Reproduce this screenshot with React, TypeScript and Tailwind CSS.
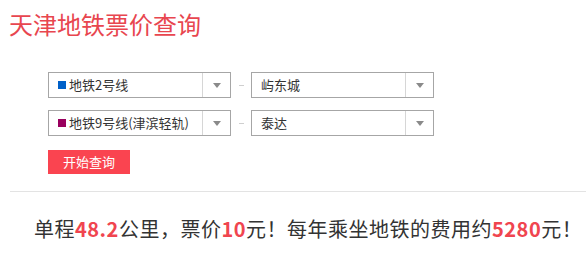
const FONT = '"Microsoft YaHei", "Noto Sans CJK SC", "Noto Sans", sans-serif';

type Opt = { label: string; color?: string };

const Select = ({ opt }: { opt: Opt }) => (
  <div className="flex h-[26px] w-[183px] items-stretch border border-[#a6a6a6] bg-white">
    <div className="flex flex-1 items-center gap-[3px] pl-[9px] text-[13px] text-[#333]">
      {opt.color && <span className="inline-block h-[8px] w-[8px]" style={{ background: opt.color }} />}
      <span>{opt.label}</span>
    </div>
    <div className="flex w-[28px] items-center justify-center border-l border-[#d6d6d6]">
      <svg width="8" height="5" viewBox="0 0 8 5">
        <path d="M0 0h8L4 5z" fill="#8a8a8a" />
      </svg>
    </div>
  </div>
);

const Row = ({ line, station }: { line: Opt; station: Opt }) => (
  <div className="flex items-center">
    <Select opt={line} />
    <div className="flex w-[20px] justify-center">
      <span className="block h-px w-[5px] bg-[#cfcfcf]" />
    </div>
    <Select opt={station} />
  </div>
);

export default function App() {
  return (
    <div className="w-[586px] bg-white" style={{ fontFamily: FONT }}>
      <h1 className="pl-[9px] pt-[8px] text-[24px] leading-[32px] font-normal text-[#e8464f]">天津地铁票价查询</h1>

      <div className="ml-[48px] mt-[32px] flex flex-col gap-[12px]">
        <Row line={{ label: "地铁2号线", color: "#0060c8" }} station={{ label: "屿东城" }} />
        <Row line={{ label: "地铁9号线(津滨轻轨)", color: "#99005e" }} station={{ label: "泰达" }} />
      </div>

      <button className="ml-[48px] mt-[14px] flex h-[24px] w-[82px] items-center justify-center bg-[#fa4450] text-[13px] text-white">
        开始查询
      </button>

      <div className="ml-[10px] mt-[17px] h-px bg-[#e3e3e3]" />

      <p className="pl-[34px] pt-[22px] text-[20px] leading-[30px] tracking-[0.5px] text-[#333]">
        单程<b className="font-bold text-[#f0454f]">48.2</b>公里，票价<b className="font-bold text-[#f0454f]">10</b>元！每年乘坐地铁的费用约<b className="font-bold text-[#f0454f]">5280</b>元！
      </p>
    </div>
  );
}
